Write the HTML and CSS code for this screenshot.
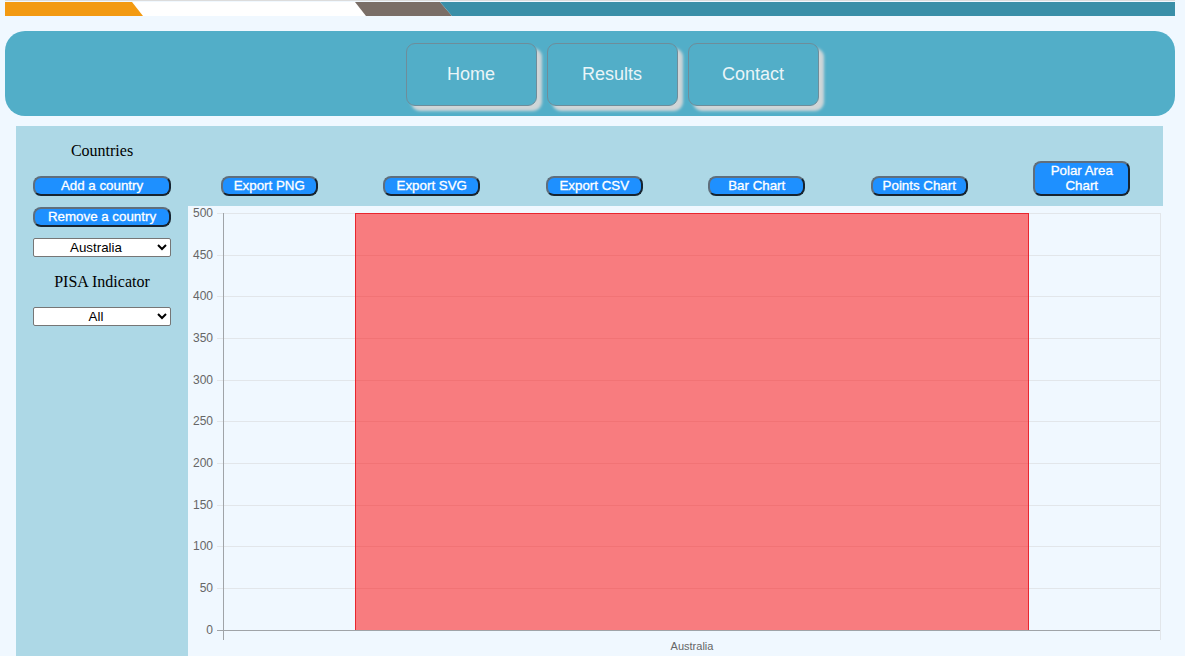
FILE: index.html
```html
<!DOCTYPE html>
<html lang="en">
<head>
<meta charset="utf-8">
<title>PISA Results</title>
<link rel="stylesheet" href="styles.css">
</head>
<body>
<div class="banner">
  <svg width="1170" height="14" viewBox="0 0 1170 14">
    <rect x="0" y="0" width="1170" height="14" fill="#ffffff"/>
    <polygon points="0,0 127,0 138,14 0,14" fill="#f39a12"/>
    <polygon points="350,0 435,0 447,14 361,14" fill="#7a6e67"/>
    <polygon points="435,0 1170,0 1170,14 447,14" fill="#3a8fa8"/>
  </svg>
</div>
<nav class="nav">
  <a class="nav-btn" href="#">Home</a>
  <a class="nav-btn" href="#">Results</a>
  <a class="nav-btn" href="#">Contact</a>
</nav>
<main class="main">
  <aside class="sidebar">
    <div class="side-title">Countries</div>
    <button class="btn side-btn first">Add a country</button>
    <button class="btn side-btn">Remove a country</button>
    <select class="sel"><option>Australia</option></select>
    <div class="side-title second">PISA Indicator</div>
    <select class="sel"><option>All</option></select>
  </aside>
  <section class="content">
    <div class="toolbar">
      <button class="btn tool-btn">Export PNG</button>
      <button class="btn tool-btn">Export SVG</button>
      <button class="btn tool-btn">Export CSV</button>
      <button class="btn tool-btn">Bar Chart</button>
      <button class="btn tool-btn">Points Chart</button>
      <button class="btn tool-btn">Polar Area Chart</button>
    </div>
    <div class="chart">
      <svg width="975" height="450" viewBox="0 0 975 450" font-family="'Liberation Sans', Arial, sans-serif" font-size="12">
        <g stroke="#e2e6ea" stroke-width="1">
          <line x1="29" y1="7.5" x2="972" y2="7.5"/>
          <line x1="29" y1="49.5" x2="972" y2="49.5"/>
          <line x1="29" y1="90.5" x2="972" y2="90.5"/>
          <line x1="29" y1="132.5" x2="972" y2="132.5"/>
          <line x1="29" y1="174.5" x2="972" y2="174.5"/>
          <line x1="29" y1="215.5" x2="972" y2="215.5"/>
          <line x1="29" y1="257.5" x2="972" y2="257.5"/>
          <line x1="29" y1="299.5" x2="972" y2="299.5"/>
          <line x1="29" y1="340.5" x2="972" y2="340.5"/>
          <line x1="29" y1="382.5" x2="972" y2="382.5"/>
          <line x1="972.5" y1="7" x2="972.5" y2="434"/>
        </g>
        <rect x="167.5" y="7.5" width="673" height="417" fill="rgba(255,0,0,0.5)" stroke="#e8262f" stroke-width="1"/>
        <g stroke="#a0a4a8" stroke-width="1">
          <line x1="35.5" y1="7" x2="35.5" y2="434"/>
          <line x1="29" y1="424.5" x2="972" y2="424.5"/>
        </g>
        <g fill="#666" text-anchor="end">
          <text x="25" y="11">500</text>
          <text x="25" y="53">450</text>
          <text x="25" y="94">400</text>
          <text x="25" y="136">350</text>
          <text x="25" y="178">300</text>
          <text x="25" y="219">250</text>
          <text x="25" y="261">200</text>
          <text x="25" y="303">150</text>
          <text x="25" y="344">100</text>
          <text x="25" y="386">50</text>
          <text x="25" y="428">0</text>
        </g>
        <text x="504" y="444" fill="#666" font-size="11" text-anchor="middle">Australia</text>
      </svg>
    </div>
  </section>
</main>
</body>
</html>
```

FILE: styles.css
```css
html, body {
  margin: 0;
  padding: 0;
  background: #f0f8ff;
  overflow: hidden;
}

body {
  font-family: "Liberation Sans", Arial, sans-serif;
}

.banner {
  margin: 0 10px 0 5px;
  padding-top: 1px;
  border-top: 1px solid #dcdcdc;
  box-sizing: border-box;
  height: 16px;
}

.banner svg {
  display: block;
}

.nav {
  margin: 15px 10px 0 5px;
  height: 85px;
  box-sizing: border-box;
  background: #52aec8;
  border-radius: 20px;
  display: flex;
  justify-content: center;
  align-items: flex-start;
  gap: 10px;
  padding-top: 12px;
  padding-left: 44px;
}

.nav-btn {
  width: 131px;
  height: 63px;
  box-sizing: border-box;
  border: 1px solid #6e8d9a;
  border-radius: 9px;
  background: #52aec8;
  box-shadow: 5px 5px 3px #cfd6d8;
  color: #eaf5f8;
  text-decoration: none;
  font-size: 18px;
  display: flex;
  align-items: center;
  justify-content: center;
}

.main {
  margin: 10px 0 0 16px;
  width: 1147px;
  height: 530px;
  background: #add8e6;
  display: flex;
}

.sidebar {
  width: 172px;
  flex: none;
  display: flex;
  flex-direction: column;
  align-items: center;
  padding-top: 16px;
  box-sizing: border-box;
}

.side-title {
  font-family: "Liberation Serif", "Times New Roman", serif;
  font-size: 16px;
  line-height: 18px;
  color: #000;
}

.side-title.second {
  margin-top: 16px;
}

.btn {
  background: #1e90ff;
  color: #fff;
  font-family: "Liberation Sans", Arial, sans-serif;
  font-size: 13.33px;
  line-height: 15px;
  padding: 0 4px 1px;
  border: 2px solid;
  border-color: #5f6e7c #172430 #172430 #5f6e7c;
  border-radius: 8px;
  box-sizing: border-box;
  cursor: pointer;
  -webkit-text-stroke: 0.3px #fff;
}

.side-btn {
  width: 138px;
  height: 20px;
  margin-top: 11px;
}

.side-btn.first {
  margin-top: 16px;
}

.sel {
  width: 138px;
  height: 19px;
  margin-top: 11px;
  font-family: "Liberation Sans", Arial, sans-serif;
  font-size: 13.33px;
  text-align: center;
  text-align-last: center;
  border: 1px solid #767676;
  border-radius: 2px;
  background: #fff;
  color: #000;
  padding: 0;
  box-sizing: border-box;
}

.side-title.second + .sel {
  margin-top: 16px;
}

.content {
  flex: 1;
  display: flex;
  flex-direction: column;
}

.toolbar {
  height: 80px;
  box-sizing: border-box;
  display: flex;
  justify-content: space-around;
  align-items: flex-end;
  padding-bottom: 10px;
}

.tool-btn {
  width: 97px;
  padding: 0 6px 1px;
}

.chart {
  height: 450px;
  background: #f0f8ff;
}

.chart svg {
  display: block;
}
```
